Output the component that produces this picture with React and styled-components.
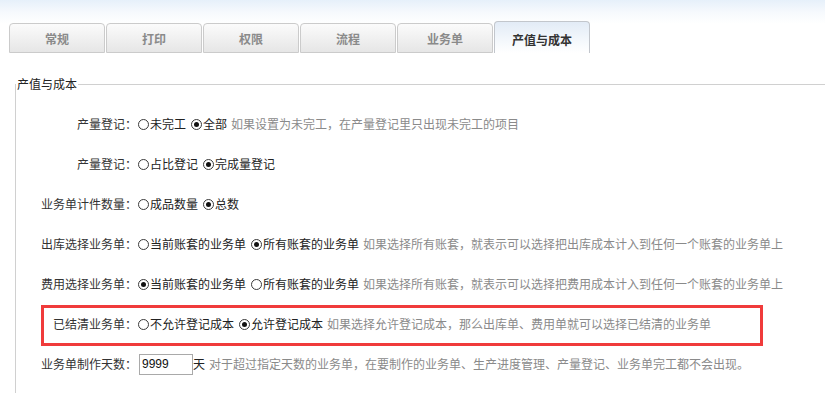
import React from 'react'
import styled, { createGlobalStyle } from 'styled-components';

const GlobalStyle = createGlobalStyle`
  html, body {
    margin: 0;
    padding: 0;
    overflow: hidden;
  }
  body {
    background: linear-gradient(to bottom, #e6f0fa 0, #f6f9fd 12px, #ffffff 24px) no-repeat #ffffff;
    font-family: "Noto Sans CJK SC", "Microsoft YaHei", sans-serif;
    font-size: 12px;
    color: #333;
  }
`;

const Page = styled.div`
  padding-top: 21px;
`;

const TabBar = styled.div`
  display: flex;
  align-items: flex-end;
  gap: 1px;
  height: 32px;
  padding-left: 9px;
`;

const Tab = styled.div`
  box-sizing: border-box;
  width: 96px;
  height: ${p => (p.$active ? '32px' : '30px')};
  display: flex;
  align-items: center;
  justify-content: center;
  padding-top: ${p => (p.$active ? '4px' : '2px')};
  border: 1px solid ${p => (p.$active ? '#c2c6cc' : '#cbcbcb')};
  border-bottom: ${p => (p.$active ? 'none' : '1px solid #cbcbcb')};
  border-radius: 4px 4px 0 0;
  background: ${p => (p.$active
    ? 'linear-gradient(to bottom, #e2ebf6 0, #f4f8fc 60%, #ffffff 100%)'
    : 'linear-gradient(to bottom, #fbfbfb 0, #e6e6e6 100%)')};
  color: ${p => (p.$active ? '#333' : '#8a8a8a')};
  font-weight: bold;
  font-size: 12px;
  line-height: 16px;
`;

const Fieldset = styled.fieldset`
  margin: 23px 0 0 15px;
  padding: 12px 0 0 0;
  border: none;
  border-top: 1px solid #d0d0d0;
  border-left: 1px solid #d0d0d0;
  min-height: 320px;
  min-width: 0;
  legend {
    padding: 0 1px;
    font-size: 12px;
    line-height: 16px;
    color: #222;
  }
`;

const Row = styled.div`
  position: relative;
  display: flex;
  align-items: center;
  height: 40px;
  white-space: nowrap;
  line-height: 16px;

  ${p => p.$marked && `
    &::after {
      content: '';
      position: absolute;
      left: 25px;
      top: 1px;
      width: 722px;
      height: 41px;
      box-sizing: border-box;
      border: 3px solid #f03b3b;
      pointer-events: none;
    }
  `}
`;

const Label = styled.span`
  flex-shrink: 0;
  width: 121px;
  text-align: right;
  color: #333;
`;

const Option = styled.label`
  display: inline-flex;
  align-items: center;
  margin-right: 4px;
  color: #222;
`;

const Radio = styled.span`
  box-sizing: border-box;
  width: 11px;
  height: 11px;
  margin: 0 1px;
  border-radius: 50%;
  border: 1px solid #3a3a3a;
  display: inline-flex;
  align-items: center;
  justify-content: center;
  background: #fff;
  &::before {
    content: '';
    width: 5px;
    height: 5px;
    border-radius: 50%;
    background: ${p => (p.$checked ? '#111' : 'transparent')};
  }
`;

const Hint = styled.span`
  color: #8a8a8a;
`;

const DaysInput = styled.input`
  box-sizing: border-box;
  width: 54px;
  height: 21px;
  margin: 0 0 0 2px;
  padding: 0 2px;
  border: 1px solid #a9a9a9;
  font-family: "Liberation Sans", Arial, sans-serif;
  font-size: 12px;
  color: #111;
  outline: none;
`;

const Unit = styled.span`
  margin-right: 4px;
  color: #222;
`;

const rows = [
  {
    label: '产量登记：',
    options: [['未完工', false], ['全部', true]],
    hint: '如果设置为未完工，在产量登记里只出现未完工的项目',
  },
  {
    label: '产量登记：',
    options: [['占比登记', false], ['完成量登记', true]],
  },
  {
    label: '业务单计件数量：',
    options: [['成品数量', false], ['总数', true]],
  },
  {
    label: '出库选择业务单：',
    options: [['当前账套的业务单', false], ['所有账套的业务单', true]],
    hint: '如果选择所有账套，就表示可以选择把出库成本计入到任何一个账套的业务单上',
  },
  {
    label: '费用选择业务单：',
    options: [['当前账套的业务单', true], ['所有账套的业务单', false]],
    hint: '如果选择所有账套，就表示可以选择把费用成本计入到任何一个账套的业务单上',
  },
  {
    label: '已结清业务单：',
    options: [['不允许登记成本', false], ['允许登记成本', true]],
    hint: '如果选择允许登记成本，那么出库单、费用单就可以选择已结清的业务单',
    marked: true,
  },
];

const tabs = ['常规', '打印', '权限', '流程', '业务单', '产值与成本'];

const App = () => {
  return (
    <Page>
      <GlobalStyle />
      <TabBar>
        {tabs.map((t, i) => (
          <Tab key={t} $active={i === tabs.length - 1}>{t}</Tab>
        ))}
      </TabBar>
      <Fieldset>
        <legend>产值与成本</legend>
        {rows.map((r, i) => (
          <Row key={i} $marked={r.marked}>
            <Label>{r.label}</Label>
            {r.options.map(([text, checked]) => (
              <Option key={text}>
                <Radio $checked={checked} />
                {text}
              </Option>
            ))}
            {r.hint && <Hint>{r.hint}</Hint>}
          </Row>
        ))}
        <Row>
          <Label>业务单制作天数：</Label>
          <DaysInput defaultValue="9999" />
          <Unit>天</Unit>
          <Hint>对于超过指定天数的业务单，在要制作的业务单、生产进度管理、产量登记、业务单完工都不会出现。</Hint>
        </Row>
      </Fieldset>
    </Page>
  )
}

export default App
